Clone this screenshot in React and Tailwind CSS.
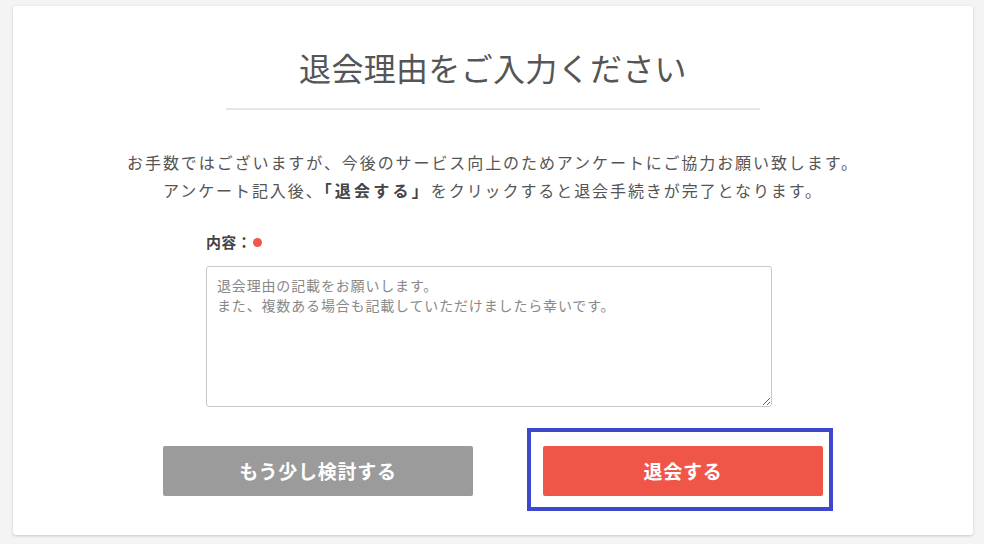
import React from "react";

const App = () => {
  return (
    <div
      className="w-[984px] h-[544px] bg-[#f4f4f4] pt-[6px] pl-[13px]"
      style={{ fontFamily: '"Noto Sans CJK JP", "Noto Sans", sans-serif' }}
    >
      <div className="w-[960px] h-[529px] bg-white rounded-[3px] shadow-[0_1px_3px_rgba(0,0,0,0.18)] pt-[37px] flex flex-col">
        {/* Title */}
        <h1 className="text-center text-[32px] leading-[48px] text-[#555] font-normal tracking-[0.01em]">
          退会理由をご入力ください
        </h1>
        <div className="mx-auto mt-[17px] w-[534px] h-[2px] bg-[#e6e6e6]" />

        {/* Intro */}
        <p className="mt-[38px] text-center text-[16px] leading-[28px] text-[#555] tracking-[0.12em]">
          お手数ではございますが、今後のサービス向上のためアンケートにご協力お願い致します。
          <br />
          アンケート記入後、
          <span className="font-bold text-[#444] tracking-[0.2em]">「退会する」</span>
          をクリックすると退会手続きが完了となります。
        </p>

        {/* Form */}
        <div className="mt-[28px] ml-[193px] w-[566px]">
          <div className="flex items-center h-[20px] text-[15px] font-bold text-[#444] tracking-[0.02em]">
            <span>内容：</span>
            <span className="ml-[1px] w-[9px] h-[9px] rounded-full bg-[#f0574a]" />
          </div>
          <textarea
            className="mt-[14px] block w-[566px] h-[141px] border border-[#c8c8c8] rounded-[3px] px-[10px] py-[8px] text-[14px] leading-[20px] tracking-[0.06em] text-[#444] placeholder:text-[#888] outline-none"
            placeholder={
              "退会理由の記載をお願いします。\nまた、複数ある場合も記載していただけましたら幸いです。"
            }
          />
        </div>

        {/* Buttons */}
        <div className="mt-[39px] flex justify-center gap-[70px]">
          <button className="w-[310px] h-[50px] bg-[#9b9b9b] rounded-[2px] text-white text-[19px] font-bold tracking-[0.04em]">
            もう少し検討する
          </button>
          <div className="relative">
            <button className="w-[280px] h-[50px] bg-[#f05647] rounded-[2px] text-white text-[19px] font-bold tracking-[0.04em]">
              退会する
            </button>
            <span className="absolute -left-[16px] -top-[18px] -right-[10px] -bottom-[15px] border-4 border-[#3f48cc] pointer-events-none" />
          </div>
        </div>
      </div>
    </div>
  );
};

export default App;
